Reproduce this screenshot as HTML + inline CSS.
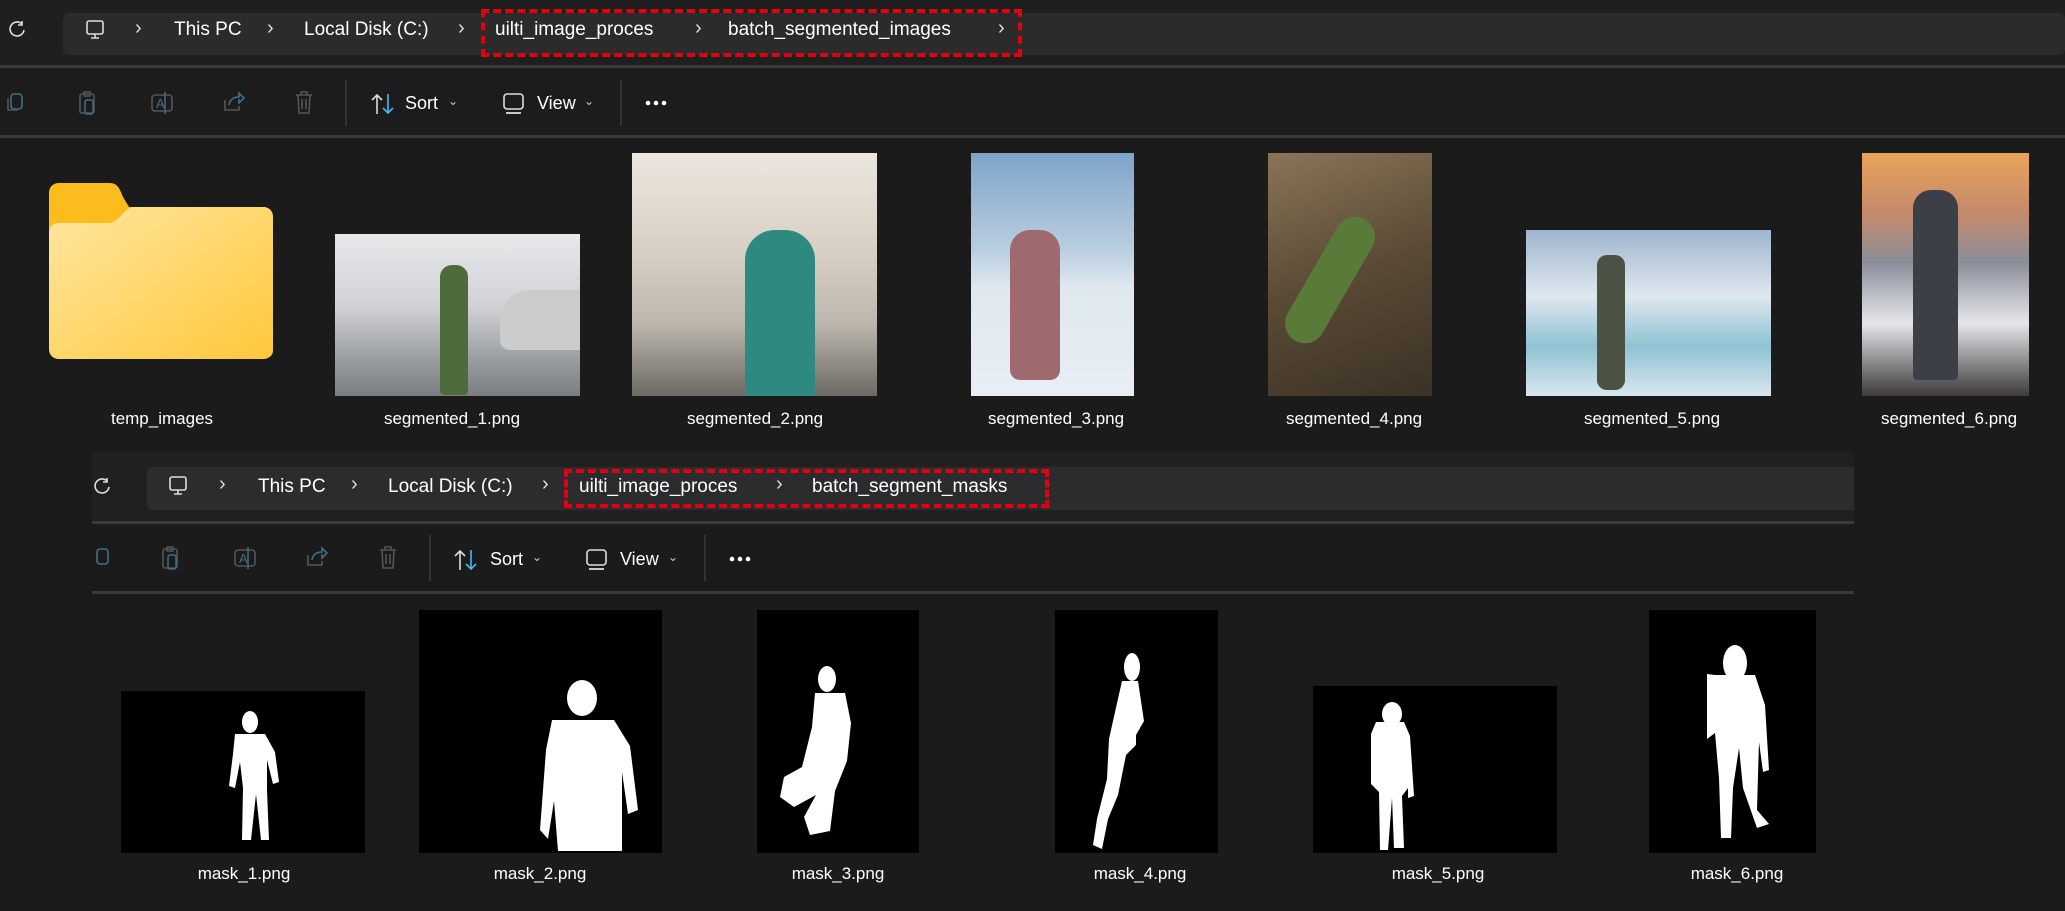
<!DOCTYPE html>
<html><head><meta charset="utf-8"><style>
*{margin:0;padding:0;box-sizing:border-box}
body{width:2065px;height:911px;background:#1b1b1b;position:relative;overflow:hidden;font-family:"Liberation Sans",sans-serif;color:#fff}
.abs{position:absolute}
.t{position:absolute;font-size:19px;color:#fff;white-space:nowrap;line-height:22px}
.chev{position:absolute;font-size:20px;color:#ddd}
.lbl{position:absolute;font-size:17px;color:#fff;transform:translateX(-50%);white-space:nowrap}
.red{position:absolute;border:4px dashed #e0000f}
.line{position:absolute;height:3px;background:#3a3a3a}
.sep{position:absolute;width:2px;background:#333}
svg{position:absolute;overflow:visible}
.m{background:#000;position:absolute}
</style></head><body>
<div class="abs" style="left:0;top:0;width:2065px;height:66px;background:#1f1f1f"></div>
<div class="abs" style="left:63px;top:13px;width:2002px;height:42px;background:#2b2b2b;border-radius:6px"></div>
<svg style="left:8px;top:20px" width="18" height="18" viewBox="0 0 18 18"><path d="M14 4 A7 7 0 1 0 16 10" fill="none" stroke="#ddd" stroke-width="1.6"/><path d="M14 1v4h-4" fill="none" stroke="#ddd" stroke-width="1.6"/></svg>
<svg style="left:84px;top:19px" width="22" height="22" viewBox="0 0 22 22"><rect x="3" y="2" width="16" height="13" rx="2" fill="none" stroke="#ddd" stroke-width="1.6"/><path d="M7 19h8M11 15v4" stroke="#ddd" stroke-width="1.6"/></svg>
<div class="chev" style="left:135px;top:17px">›</div>
<div class="t" style="left:174px;top:19px">This PC</div>
<div class="chev" style="left:267px;top:17px">›</div>
<div class="t" style="left:304px;top:19px">Local Disk (C:)</div>
<div class="chev" style="left:458px;top:17px">›</div>
<div class="red" style="left:481px;top:9px;width:541px;height:48px"></div>
<div class="t" style="left:495px;top:19px">uilti_image_proces</div>
<div class="chev" style="left:695px;top:17px">›</div>
<div class="t" style="left:728px;top:19px">batch_segmented_images</div>
<div class="chev" style="left:998px;top:17px">›</div>
<div class="line" style="left:0;top:65px;width:2065px"></div>
<div class="abs" style="left:0;top:68px;width:2065px;height:67px;background:#1c1c1c"></div>
<div class="line" style="left:0;top:135px;width:2065px"></div>

<svg style="left:6px;top:92px" width="20" height="22"><rect x="5" y="2" width="11" height="15" rx="3" fill="none" stroke="#3f6f88" stroke-width="1.6"/><path d="M2 6v12h10" fill="none" stroke="#555" stroke-width="1.6"/></svg>
<svg style="left:78px;top:90px" width="20" height="26"><rect x="2" y="4" width="14" height="19" rx="2" fill="none" stroke="#555" stroke-width="1.6"/><rect x="6" y="2" width="6" height="4" fill="none" stroke="#555" stroke-width="1.5"/><rect x="7" y="10" width="8" height="14" rx="2" fill="none" stroke="#3f6f88" stroke-width="1.5"/></svg>
<svg style="left:150px;top:90px" width="24" height="26"><rect x="2" y="5" width="20" height="16" rx="3" fill="none" stroke="#555" stroke-width="1.6"/><text x="6" y="18" font-size="13" fill="#3f6f88" font-family="Liberation Sans">A</text><path d="M15 2v22" stroke="#3f6f88" stroke-width="1.5"/></svg>
<svg style="left:222px;top:90px" width="24" height="24"><path d="M3 10v10h14v-4" fill="none" stroke="#555" stroke-width="1.6"/><path d="M7 15c1-6 5-8 10-8V3l5 5-5 5V9" fill="none" stroke="#3f6f88" stroke-width="1.6"/></svg>
<svg style="left:294px;top:90px" width="20" height="26"><path d="M2 5h16M7 5V2h6v3M4 5l1 18h10l1-18M8 9v10M12 9v10" fill="none" stroke="#555" stroke-width="1.6"/></svg>
<div class="sep" style="left:345px;top:80px;height:46px"></div>
<svg style="left:370px;top:92px" width="26" height="24"><path d="M7 22V3M2 8l5-5 5 5" fill="none" stroke="#ddd" stroke-width="1.6"/><path d="M18 2v19M13 16l5 5 5-5" fill="none" stroke="#4cb8f0" stroke-width="1.6"/></svg>
<div class="t" style="left:405px;top:92px;font-size:18px">Sort</div>
<div class="t" style="left:448px;top:90px;font-size:12px;color:#ccc">⌄</div>
<svg style="left:502px;top:92px" width="24" height="24"><rect x="2" y="2" width="19" height="15" rx="3" fill="none" stroke="#ddd" stroke-width="1.6"/><path d="M4 21h15" stroke="#ddd" stroke-width="1.8"/></svg>
<div class="t" style="left:537px;top:92px;font-size:18px">View</div>
<div class="t" style="left:584px;top:90px;font-size:12px;color:#ccc">⌄</div>
<div class="sep" style="left:620px;top:80px;height:46px"></div>
<svg style="left:645px;top:100px" width="26" height="8"><circle cx="3" cy="3" r="2.3" fill="#fff"/><circle cx="11" cy="3" r="2.3" fill="#fff"/><circle cx="19" cy="3" r="2.3" fill="#fff"/></svg>

<svg style="left:49px;top:183px" width="224" height="176" viewBox="0 0 224 176">
<defs><linearGradient id="fg" x1="0" y1="0" x2="1" y2="1"><stop offset="0" stop-color="#ffe6a0"/><stop offset="1" stop-color="#ffc83a"/></linearGradient></defs>
<path d="M10 0h50c8 0 10 4 14 14l6 10h134c6 0 10 4 10 10v130c0 6-4 10-10 10H10c-6 0-10-4-10-10V10C0 4 4 0 10 0z" fill="#fbbd1e"/>
<path d="M10 40h50c10 0 14-14 24-16h130c6 0 10 4 10 10v134c0 4-4 8-10 8H10c-6 0-10-4-10-10V50c0-6 4-10 10-10z" fill="url(#fg)"/>
</svg>
<div class="abs" style="left:335px;top:234px;width:245px;height:162px;background:linear-gradient(180deg,#e8e8ea 0%,#d0d2d6 45%,#9ea1a4 75%,#7b7e80 100%)"></div>
<div class="abs" style="left:440px;top:265px;width:28px;height:130px;background:#4f6b3c;border-radius:12px 12px 4px 4px"></div>
<div class="abs" style="left:500px;top:290px;width:80px;height:60px;background:#ccc;border-radius:30px 0 0 10px"></div>
<div class="abs" style="left:632px;top:153px;width:245px;height:243px;background:linear-gradient(180deg,#ebe6df 0%,#d8d0c4 40%,#bdb7ad 70%,#6c6a66 100%)"></div>
<div class="abs" style="left:745px;top:230px;width:70px;height:166px;background:#2e8a80;border-radius:30px 30px 4px 4px"></div>
<div class="abs" style="left:971px;top:153px;width:163px;height:243px;background:linear-gradient(180deg,#7ea4c8 0%,#b9cee0 40%,#dfe8f0 55%,#e8eef4 100%)"></div>
<div class="abs" style="left:1010px;top:230px;width:50px;height:150px;background:#9e6a70;border-radius:20px 20px 10px 10px"></div>
<div class="abs" style="left:1268px;top:153px;width:164px;height:243px;background:linear-gradient(160deg,#8a7458,#5a4a35 50%,#3b3225)"></div>
<div class="abs" style="left:1310px;top:210px;width:40px;height:140px;background:#5a7a3a;border-radius:20px;transform:rotate(30deg)"></div>
<div class="abs" style="left:1526px;top:230px;width:245px;height:166px;background:linear-gradient(180deg,#9fb6cf 0%,#dfe7ef 40%,#8fc3d3 70%,#d9e6ee 100%)"></div>
<div class="abs" style="left:1597px;top:255px;width:28px;height:135px;background:#4b5243;border-radius:10px"></div>
<div class="abs" style="left:1862px;top:153px;width:167px;height:243px;background:linear-gradient(180deg,#e9a35a 0%,#c48a6a 25%,#8a8e9a 45%,#e6e6ea 70%,#3c3a3a 100%)"></div>
<div class="abs" style="left:1913px;top:190px;width:45px;height:190px;background:#3d3f47;border-radius:18px 18px 4px 4px"></div>
<div class="lbl" style="left:162px;top:409px">temp_images</div>
<div class="lbl" style="left:452px;top:409px">segmented_1.png</div>
<div class="lbl" style="left:755px;top:409px">segmented_2.png</div>
<div class="lbl" style="left:1056px;top:409px">segmented_3.png</div>
<div class="lbl" style="left:1354px;top:409px">segmented_4.png</div>
<div class="lbl" style="left:1652px;top:409px">segmented_5.png</div>
<div class="lbl" style="left:1949px;top:409px">segmented_6.png</div>

<div class="abs" style="left:92px;top:452px;width:1762px;height:70px;background:#202020"></div>
<div class="abs" style="left:147px;top:467px;width:1707px;height:43px;background:#2c2c2e;border-radius:6px 0 0 6px"></div>
<svg style="left:93px;top:477px" width="18" height="18" viewBox="0 0 18 18"><path d="M14 4 A7 7 0 1 0 16 10" fill="none" stroke="#ddd" stroke-width="1.6"/><path d="M14 1v4h-4" fill="none" stroke="#ddd" stroke-width="1.6"/></svg>
<svg style="left:167px;top:475px" width="22" height="22" viewBox="0 0 22 22"><rect x="3" y="2" width="16" height="13" rx="2" fill="none" stroke="#ddd" stroke-width="1.6"/><path d="M7 19h8M11 15v4" stroke="#ddd" stroke-width="1.6"/></svg>
<div class="chev" style="left:219px;top:473px">›</div>
<div class="t" style="left:258px;top:476px">This PC</div>
<div class="chev" style="left:351px;top:473px">›</div>
<div class="t" style="left:388px;top:476px">Local Disk (C:)</div>
<div class="chev" style="left:542px;top:473px">›</div>
<div class="red" style="left:564px;top:469px;width:485px;height:39px"></div>
<div class="t" style="left:579px;top:476px">uilti_image_proces</div>
<div class="chev" style="left:776px;top:473px">›</div>
<div class="t" style="left:812px;top:476px">batch_segment_masks</div>
<div class="line" style="left:92px;top:521px;width:1762px"></div>
<div class="line" style="left:92px;top:591px;width:1762px"></div>
<svg style="left:92px;top:547px" width="20" height="22"><rect x="5" y="2" width="11" height="15" rx="3" fill="none" stroke="#3f6f88" stroke-width="1.6"/></svg>
<svg style="left:161px;top:545px" width="20" height="26"><rect x="2" y="4" width="14" height="19" rx="2" fill="none" stroke="#555" stroke-width="1.6"/><rect x="6" y="2" width="6" height="4" fill="none" stroke="#555" stroke-width="1.5"/><rect x="7" y="10" width="8" height="14" rx="2" fill="none" stroke="#3f6f88" stroke-width="1.5"/></svg>
<svg style="left:233px;top:545px" width="24" height="26"><rect x="2" y="5" width="20" height="16" rx="3" fill="none" stroke="#555" stroke-width="1.6"/><text x="6" y="18" font-size="13" fill="#3f6f88" font-family="Liberation Sans">A</text><path d="M15 2v22" stroke="#3f6f88" stroke-width="1.5"/></svg>
<svg style="left:305px;top:545px" width="24" height="24"><path d="M3 10v10h14v-4" fill="none" stroke="#555" stroke-width="1.6"/><path d="M7 15c1-6 5-8 10-8V3l5 5-5 5V9" fill="none" stroke="#3f6f88" stroke-width="1.6"/></svg>
<svg style="left:378px;top:545px" width="20" height="26"><path d="M2 5h16M7 5V2h6v3M4 5l1 18h10l1-18M8 9v10M12 9v10" fill="none" stroke="#555" stroke-width="1.6"/></svg>
<div class="sep" style="left:429px;top:535px;height:46px"></div>
<svg style="left:453px;top:548px" width="26" height="24"><path d="M7 22V3M2 8l5-5 5 5" fill="none" stroke="#ddd" stroke-width="1.6"/><path d="M18 2v19M13 16l5 5 5-5" fill="none" stroke="#4cb8f0" stroke-width="1.6"/></svg>
<div class="t" style="left:490px;top:548px;font-size:18px">Sort</div>
<div class="t" style="left:532px;top:546px;font-size:12px;color:#ccc">⌄</div>
<svg style="left:585px;top:548px" width="24" height="24"><rect x="2" y="2" width="19" height="15" rx="3" fill="none" stroke="#ddd" stroke-width="1.6"/><path d="M4 21h15" stroke="#ddd" stroke-width="1.8"/></svg>
<div class="t" style="left:620px;top:548px;font-size:18px">View</div>
<div class="t" style="left:668px;top:546px;font-size:12px;color:#ccc">⌄</div>
<div class="sep" style="left:704px;top:535px;height:46px"></div>
<svg style="left:729px;top:556px" width="26" height="8"><circle cx="3" cy="3" r="2.3" fill="#fff"/><circle cx="11" cy="3" r="2.3" fill="#fff"/><circle cx="19" cy="3" r="2.3" fill="#fff"/></svg>

<div class="m" style="left:121px;top:691px;width:244px;height:162px"></div>
<svg style="left:215px;top:710px" width="70" height="140" viewBox="0 0 70 140"><g fill="#fff"><ellipse cx="35" cy="12" rx="8" ry="11"/><path d="M20 24h30l10 18 4 30-6 2-6-24v30l2 50h-8l-5-46-5 46h-9l1-52-3-26-5 26-6-2 4-32z"/></g></svg>
<div class="m" style="left:419px;top:610px;width:243px;height:243px"></div>
<svg style="left:540px;top:680px" width="105" height="173" viewBox="0 0 105 173"><g fill="#fff"><ellipse cx="42" cy="18" rx="15" ry="18"/><path d="M12 40h62l16 26 8 64-10 4-6-42v79H18l-4-50-6 38L0 150l6-80z"/></g></svg>
<div class="m" style="left:757px;top:610px;width:162px;height:243px"></div>
<svg style="left:775px;top:665px" width="100" height="175" viewBox="0 0 100 175"><g fill="#fff"><ellipse cx="52" cy="14" rx="9" ry="13"/><path d="M40 28h30l6 30-4 38-12 30-5 40-20 4-6-18 12-22-22 12-14-10 4-20 18-10 10-40z"/></g></svg>
<div class="m" style="left:1055px;top:610px;width:163px;height:243px"></div>
<svg style="left:1087px;top:653px" width="60" height="200" viewBox="0 0 60 200"><g fill="#fff"><ellipse cx="45" cy="14" rx="8" ry="14"/><path d="M35 28h16l6 40-8 14v10l-10 10-8 40-10 24-6 30-9-4 4-26 10-40 2-40 4-18z"/></g></svg>
<div class="m" style="left:1313px;top:686px;width:244px;height:167px"></div>
<svg style="left:1360px;top:700px" width="60" height="150" viewBox="0 0 60 150"><g fill="#fff"><ellipse cx="32" cy="14" rx="10" ry="12"/><path d="M16 22h28l6 14 4 60-6 2v-10l-6 8 2 52h-10l-2-50-4 52h-8l-1-58-8-8v-50z"/></g></svg>
<div class="m" style="left:1649px;top:610px;width:167px;height:243px"></div>
<svg style="left:1693px;top:645px" width="82" height="205" viewBox="0 0 82 205"><g fill="#fff"><ellipse cx="42" cy="18" rx="12" ry="18"/><path d="M22 30h40l10 30 4 65-6 2-4-30-2 68 12 14-12 4-14-40-4-40-6 40-2 50h-10l-2-60-4-45-8 6 0-65z"/></g></svg>
<div class="lbl" style="left:244px;top:864px">mask_1.png</div>
<div class="lbl" style="left:540px;top:864px">mask_2.png</div>
<div class="lbl" style="left:838px;top:864px">mask_3.png</div>
<div class="lbl" style="left:1140px;top:864px">mask_4.png</div>
<div class="lbl" style="left:1438px;top:864px">mask_5.png</div>
<div class="lbl" style="left:1737px;top:864px">mask_6.png</div>
</body></html>
